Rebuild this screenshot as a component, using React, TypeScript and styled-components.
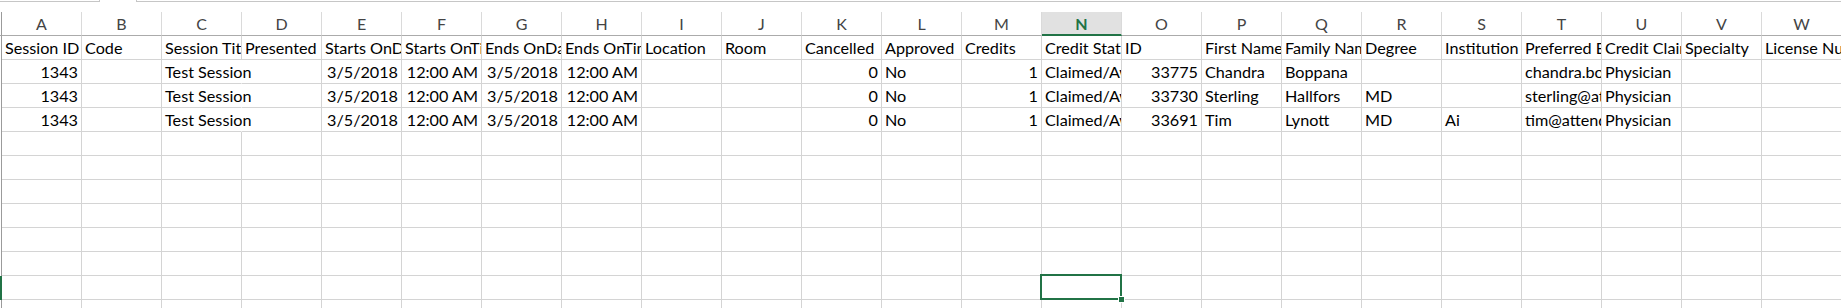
import styled, { createGlobalStyle } from 'styled-components';

const GREEN = '#217346';
const GRID = '#d4d4d4';

const COLS = 'ABCDEFGHIJKLMNOPQRSTUVW'.split('');
const ACTIVE_COL = 'N';
const ACTIVE_ROW = 11;
const ROW_COUNT = 12;

const header = [
  'Session ID', 'Code', 'Session Title', 'Presented By', 'Starts OnDate', 'Starts OnTime',
  'Ends OnDate', 'Ends OnTime', 'Location', 'Room', 'Cancelled', 'Approved', 'Credits',
  'Credit Status', 'ID', 'First Name', 'Family Name', 'Degree', 'Institution',
  'Preferred Email', 'Credit Claimed As', 'Specialty', 'License Number',
];

const session = ['1343', '', 'Test Session', '', '3/5/2018', '12:00 AM', '3/5/2018', '12:00 AM', '', '', '0', 'No', '1', 'Claimed/Awarded'];

const data: string[][] = [
  header,
  [...session, '33775', 'Chandra', 'Boppana', '', '', 'chandra.boppana@attendee.com', 'Physician', '', ''],
  [...session, '33730', 'Sterling', 'Hallfors', 'MD', '', 'sterling@attendee.com', 'Physician', '', ''],
  [...session, '33691', 'Tim', 'Lynott', 'MD', 'Ai', 'tim@attendee.com', 'Physician', '', ''],
];

// text that runs on into the empty cell beside it
const SPILL = new Set(['C']);

const isNumeric = (v: string) => /^[\d/:]+( AM| PM)?$/.test(v);

const GlobalStyle = createGlobalStyle`
  html, body {
    margin: 0;
    padding: 0;
    background: #fff;
  }
  body {
    font-family: Lato, 'Liberation Sans', Arial, sans-serif;
    overflow: hidden;
  }
`;

const Page = styled.div`
  width: 1841px;
  height: 308px;
  overflow: hidden;
`;

const TopStrip = styled.div`
  display: flex;
  height: 12px;
`;

const NameBox = styled.div`
  width: 99px;
  height: 1px;
  border-bottom: 1px solid #c6c6c6;
  border-right: 1px solid #c6c6c6;
`;

const FormulaBar = styled.div`
  flex: 1;
  margin-left: 36px;
  height: 1px;
  border-bottom: 1px solid #c6c6c6;
  border-left: 1px solid #c6c6c6;
`;

const Sheet = styled.div`
  display: grid;
  grid-template-columns: 2px repeat(${COLS.length}, 80px);
  grid-auto-rows: 24px;
`;

const RowHead = styled.div<{ $active?: boolean; $top?: boolean }>`
  box-sizing: border-box;
  border-right: 1px solid ${p => (p.$active ? GREEN : '#9b9b9b')};
  background: ${p => (p.$active ? GREEN : 'transparent')};
  border-bottom: ${p => (p.$top ? '1px solid #ababab' : 'none')};
`;

const ColHead = styled.div<{ $active?: boolean }>`
  box-sizing: border-box;
  display: flex;
  align-items: center;
  justify-content: center;
  font-size: 16px;
  color: ${p => (p.$active ? GREEN : '#444')};
  font-weight: ${p => (p.$active ? 700 : 400)};
  background: ${p => (p.$active ? '#e1e1e1' : '#fff')};
  border-right: 1px solid #dadada;
  border-bottom: ${p => (p.$active ? `2px solid ${GREEN}` : '1px solid #ababab')};
`;

const Cell = styled.div<{ $right?: boolean; $spill?: boolean; $selected?: boolean }>`
  box-sizing: border-box;
  display: flex;
  align-items: flex-end;
  justify-content: ${p => (p.$right ? 'flex-end' : 'flex-start')};
  padding: 0 3px 1px 3px;
  font-size: 16.2px;
  line-height: 20px;
  color: #000;
  white-space: nowrap;
  overflow: ${p => (p.$spill || p.$selected ? 'visible' : 'hidden')};
  border-right: 1px solid ${p => (p.$spill ? 'transparent' : GRID)};
  border-bottom: 1px solid ${GRID};
  ${p =>
    p.$selected &&
    `
    position: relative;
    z-index: 1;
    &::after {
      content: '';
      position: absolute;
      top: -2px;
      left: -2px;
      right: -1px;
      bottom: -1px;
      border: 2px solid ${GREEN};
    }
    &::before {
      content: '';
      position: absolute;
      right: -4px;
      bottom: -4px;
      width: 5px;
      height: 5px;
      background: ${GREEN};
      border: 1px solid #fff;
      z-index: 2;
    }
  `}
`;

export default function App() {
  const rows = Array.from({ length: ROW_COUNT }, (_, i) => data[i] ?? []);
  return (
    <Page>
      <GlobalStyle />
      <TopStrip>
        <NameBox />
        <FormulaBar />
      </TopStrip>
      <Sheet>
        <RowHead $top />
        {COLS.map(c => (
          <ColHead key={c} $active={c === ACTIVE_COL}>
            {c}
          </ColHead>
        ))}
        {rows.map((row, r) => [
          <RowHead key={`h${r}`} $active={r + 1 === ACTIVE_ROW} />,
          ...COLS.map((c, ci) => {
            const v = row[ci] ?? '';
            const next = row[ci + 1] ?? '';
            return (
              <Cell
                key={`${c}${r}`}
                $right={isNumeric(v)}
                $spill={r > 0 && SPILL.has(c) && v !== '' && next === ''}
                $selected={c === ACTIVE_COL && r + 1 === ACTIVE_ROW}
              >
                {v}
              </Cell>
            );
          }),
        ])}
      </Sheet>
    </Page>
  );
}
